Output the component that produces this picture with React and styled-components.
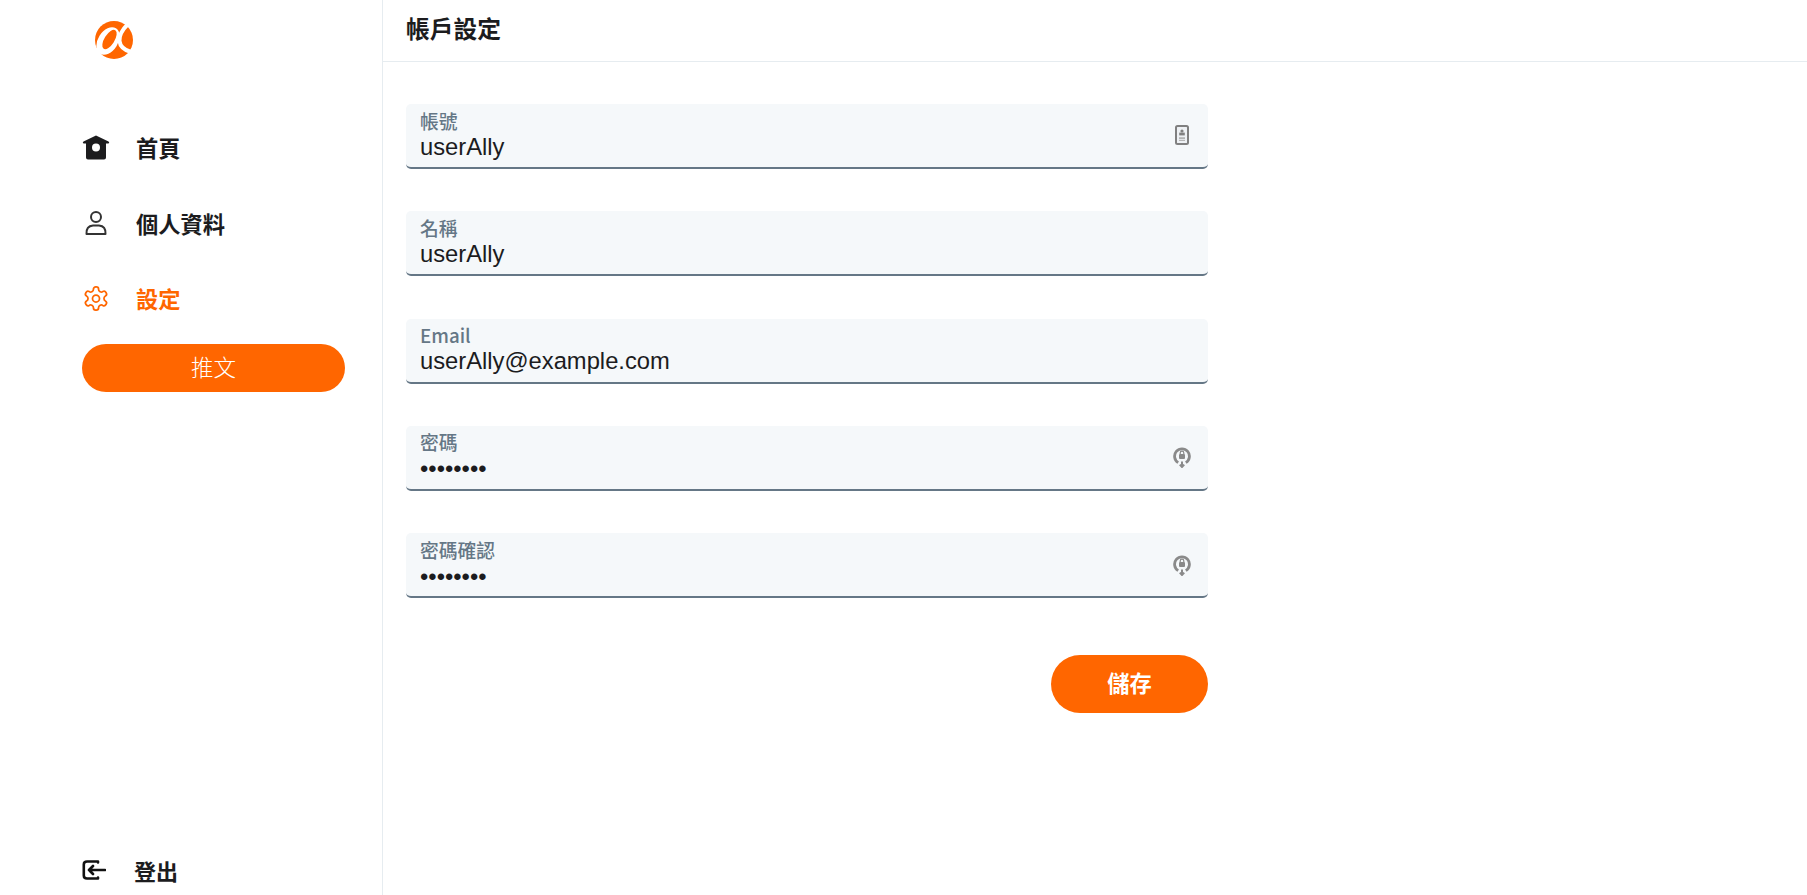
import styled, { createGlobalStyle } from "styled-components";

const GlobalStyle = createGlobalStyle`
  * {
    box-sizing: border-box;
  }
  html, body {
    margin: 0;
    padding: 0;
    height: 100%;
    background: #fff;
    font-family: "Liberation Sans", "Noto Sans CJK TC", sans-serif;
    overflow: hidden;
  }
`;

function Logo() {
  return (
    <svg width="40" height="40" viewBox="0 0 40 40">
      <circle cx="20" cy="20" r="19" fill="#ff6600" />
      <ellipse cx="14" cy="21" rx="10" ry="15" transform="rotate(32 14 21)" fill="#fff" />
      <ellipse cx="15.5" cy="19.5" rx="5" ry="11" transform="rotate(32 15.5 19.5)" fill="#ff6600" />
      <path
        d="M34 4 C28 10 25 16 25.5 21 C26 26 30 30 37 32"
        fill="none"
        stroke="#fff"
        strokeWidth="4"
      />
    </svg>
  );
}

function HomeIcon() {
  return (
    <svg width="28" height="26" viewBox="0 0 28 26">
      <path
        d="M14 .5 L26.5 6.5 Q28 7.6 26.5 8.4 L24 8.4 L24 22.5 Q24 24.5 22 24.5 L6 24.5 Q4 24.5 4 22.5 L4 8.4 L1.5 8.4 Q0 7.6 1.5 6.5 Z"
        fill="#1c1c1e"
      />
      <circle cx="14" cy="12.5" r="4" fill="#fff" />
    </svg>
  );
}

function UserIcon() {
  return (
    <svg width="24" height="26" viewBox="0 0 24 26" fill="none" stroke="#333" strokeWidth="2">
      <circle cx="12" cy="7" r="5" />
      <path d="M2.5 24 Q2 16 9 15.5 L15 15.5 Q22 16 21.5 24 Z" strokeLinejoin="round" />
    </svg>
  );
}

function GearIcon() {
  return (
    <svg width="29" height="29" viewBox="0 0 24 24" fill="none" stroke="#ff6600" strokeWidth="1.5" strokeLinecap="round" strokeLinejoin="round">
      <path d="M12.22 2h-.44a2 2 0 0 0-2 2v.18a2 2 0 0 1-1 1.73l-.43.25a2 2 0 0 1-2 0l-.15-.08a2 2 0 0 0-2.73.73l-.22.38a2 2 0 0 0 .73 2.73l.15.1a2 2 0 0 1 1 1.72v.51a2 2 0 0 1-1 1.74l-.15.09a2 2 0 0 0-.73 2.73l.22.38a2 2 0 0 0 2.73.73l.15-.08a2 2 0 0 1 2 0l.43.25a2 2 0 0 1 1 1.73V20a2 2 0 0 0 2 2h.44a2 2 0 0 0 2-2v-.18a2 2 0 0 1 1-1.73l.43-.25a2 2 0 0 1 2 0l.15.08a2 2 0 0 0 2.73-.73l.22-.39a2 2 0 0 0-.73-2.73l-.15-.08a2 2 0 0 1-1-1.74v-.5a2 2 0 0 1 1-1.74l.15-.09a2 2 0 0 0 .73-2.73l-.22-.38a2 2 0 0 0-2.73-.73l-.15.08a2 2 0 0 1-2 0l-.43-.25a2 2 0 0 1-1-1.73V4a2 2 0 0 0-2-2z" />
      <circle cx="12" cy="12" r="3" />
    </svg>
  );
}

function LogoutIcon() {
  return (
    <svg width="24" height="22" viewBox="0 0 24 22" fill="none" stroke="#111" strokeWidth="2.6" strokeLinecap="round" strokeLinejoin="round">
      <path d="M16 3.5 V2.5 L5 2.5 Q1.8 2.5 1.8 5.5 L1.8 16.5 Q1.8 19.5 5 19.5 L16 19.5 V18.5" />
      <path d="M23 11 L7 11 M11 7 L7 11 L11 15" />
    </svg>
  );
}

function ContactIcon() {
  return (
    <svg width="16" height="20" viewBox="0 0 16 20">
      <rect x="2" y="1" width="12" height="18" rx="1.5" fill="#eef1f4" stroke="#808080" strokeWidth="2" />
      <circle cx="8" cy="6" r="1.6" fill="#808080" />
      <rect x="5.2" y="7.6" width="5.6" height="2.8" fill="#808080" />
      <rect x="5" y="12.4" width="6" height="1.4" fill="#a5a5a5" />
      <rect x="5" y="14.8" width="6" height="1.2" fill="#b5b5b5" />
    </svg>
  );
}

function KeyIcon() {
  return (
    <svg width="18" height="22" viewBox="0 0 18 22" fill="none">
      <path d="M5.2 16.6 A7.4 7.4 0 1 1 12.8 16.6" stroke="#8a8a8a" strokeWidth="2.8" />
      <path d="M9 21 L9 15.5 M6.8 18.6 L9 21 L11.2 18.6" stroke="#8a8a8a" strokeWidth="2" />
      <rect x="6" y="8" width="6" height="5" rx="1" fill="#8a8a8a" />
      <path d="M7.2 8 V7 A1.8 1.8 0 0 1 10.8 7 V8" stroke="#8a8a8a" strokeWidth="1.2" />
    </svg>
  );
}

const fields = [
  { label: "帳號", value: "userAlly", type: "text", icon: <ContactIcon /> },
  { label: "名稱", value: "userAlly", type: "text" },
  { label: "Email", value: "userAlly@example.com", type: "text" },
  { label: "密碼", value: "password", type: "password", icon: <KeyIcon />, low: true },
  { label: "密碼確認", value: "password", type: "password", icon: <KeyIcon />, low: true },
];

const navItems = [
  { label: "首頁", icon: <HomeIcon /> },
  { label: "個人資料", icon: <UserIcon /> },
  { label: "設定", icon: <GearIcon />, active: true },
];

export default function App() {
  return (
    <Page>
      <GlobalStyle />
      <Sidebar>
        <LogoWrap>
          <Logo />
        </LogoWrap>
        <Nav>
          {navItems.map((item) => (
            <NavItem key={item.label} $active={item.active}>
              <NavIcon>{item.icon}</NavIcon>
              <NavLabel>{item.label}</NavLabel>
            </NavItem>
          ))}
        </Nav>
        <TweetButton type="button">推文</TweetButton>
        <LogoutRow>
          <LogoutIcon />
          <NavLabel>登出</NavLabel>
        </LogoutRow>
      </Sidebar>
      <Main>
        <Header>帳戶設定</Header>
        <Form>
          {fields.map((f) => (
            <Field key={f.label}>
              <FieldText>
                <FieldLabel>{f.label}</FieldLabel>
                <FieldInput type={f.type} defaultValue={f.value} readOnly />
              </FieldText>
              {f.icon && <FieldIcon $low={f.low}>{f.icon}</FieldIcon>}
            </Field>
          ))}
          <Actions>
            <SaveButton type="button">儲存</SaveButton>
          </Actions>
        </Form>
      </Main>
    </Page>
  );
}

const Page = styled.div`
  display: grid;
  grid-template-columns: 383px 1fr;
  height: 895px;
  color: #1c1c1e;
`;

const Sidebar = styled.aside`
  display: flex;
  flex-direction: column;
  border-right: 1px solid #e6ecf0;
  padding-left: 82px;
`;

const LogoWrap = styled.div`
  height: 111px;
  padding: 20px 0 0 12px;
`;

const Nav = styled.nav`
  display: flex;
  flex-direction: column;
`;

const NavItem = styled.a`
  display: flex;
  align-items: center;
  gap: 26px;
  height: 75.5px;
  padding-bottom: 2px;
  font-size: 22.25px;
  font-weight: 700;
  font-family: "Noto Sans CJK TC", sans-serif;
  color: ${(p) => (p.$active ? "#ff6600" : "#1c1c1e")};
`;

const NavIcon = styled.span`
  display: flex;
  align-items: center;
  justify-content: center;
  width: 28px;
`;

const NavLabel = styled.span`
  padding-bottom: 1px;
`;

const TweetButton = styled.button`
  width: 263px;
  height: 48px;
  margin-top: 6px;
  padding: 0 0 4px;
  border: 0;
  border-radius: 24px;
  background: #ff6600;
  color: #fff;
  font-size: 22.5px;
  font-weight: 300;
  font-family: "Noto Sans CJK TC", sans-serif;
`;

const LogoutRow = styled.a`
  display: flex;
  align-items: center;
  gap: 28px;
  margin-top: auto;
  height: 50px;
  font-size: 22px;
  font-weight: 700;
  font-family: "Noto Sans CJK TC", sans-serif;
`;

const Main = styled.main`
  display: flex;
  flex-direction: column;
`;

const Header = styled.h1`
  display: flex;
  align-items: center;
  height: 62px;
  margin: 0;
  padding: 0 0 7px 23px;
  border-bottom: 1px solid #e6ecf0;
  font-size: 23.75px;
  font-weight: 700;
  font-family: "Noto Sans CJK TC", sans-serif;
`;

const Form = styled.form`
  display: flex;
  flex-direction: column;
  gap: 42.3px;
  width: 802px;
  padding: 42px 0 0 23px;
  box-sizing: content-box;
`;

const Field = styled.label`
  display: flex;
  align-items: center;
  height: 65px;
  padding: 0 16px 0 14px;
  border-radius: 5px;
  border-bottom: 2px solid #657786;
  background: #f5f8fa;
`;

const FieldText = styled.div`
  display: flex;
  flex-direction: column;
  flex: 1;
`;

const FieldLabel = styled.span`
  height: 24px;
  font-size: 18.75px;
  line-height: 24px;
  font-weight: 500;
  color: #657786;
  font-family: "Noto Sans CJK TC", sans-serif;
`;

const FieldInput = styled.input`
  width: 100%;
  height: 30px;
  padding: 0;
  border: 0;
  outline: 0;
  background: transparent;
  font-size: 23.75px;
  font-family: "Liberation Sans", sans-serif;
  color: #1c1c1e;

  &[type="text"] {
    padding-bottom: 2px;
  }
`;

const FieldIcon = styled.span`
  display: flex;
  align-items: center;
  justify-content: center;
  width: 20px;
  margin-top: ${(p) => (p.$low ? "2px" : "0")};
  margin-bottom: 2px;
  filter: blur(0.4px);
`;

const Actions = styled.div`
  display: flex;
  justify-content: flex-end;
  margin-top: 15px;
`;

const SaveButton = styled.button`
  width: 157px;
  height: 58px;
  padding: 0 0 4px;
  border: 0;
  border-radius: 29px;
  background: #ff6600;
  color: #fff;
  font-size: 22.25px;
  font-weight: 700;
  font-family: "Noto Sans CJK TC", sans-serif;
`;
